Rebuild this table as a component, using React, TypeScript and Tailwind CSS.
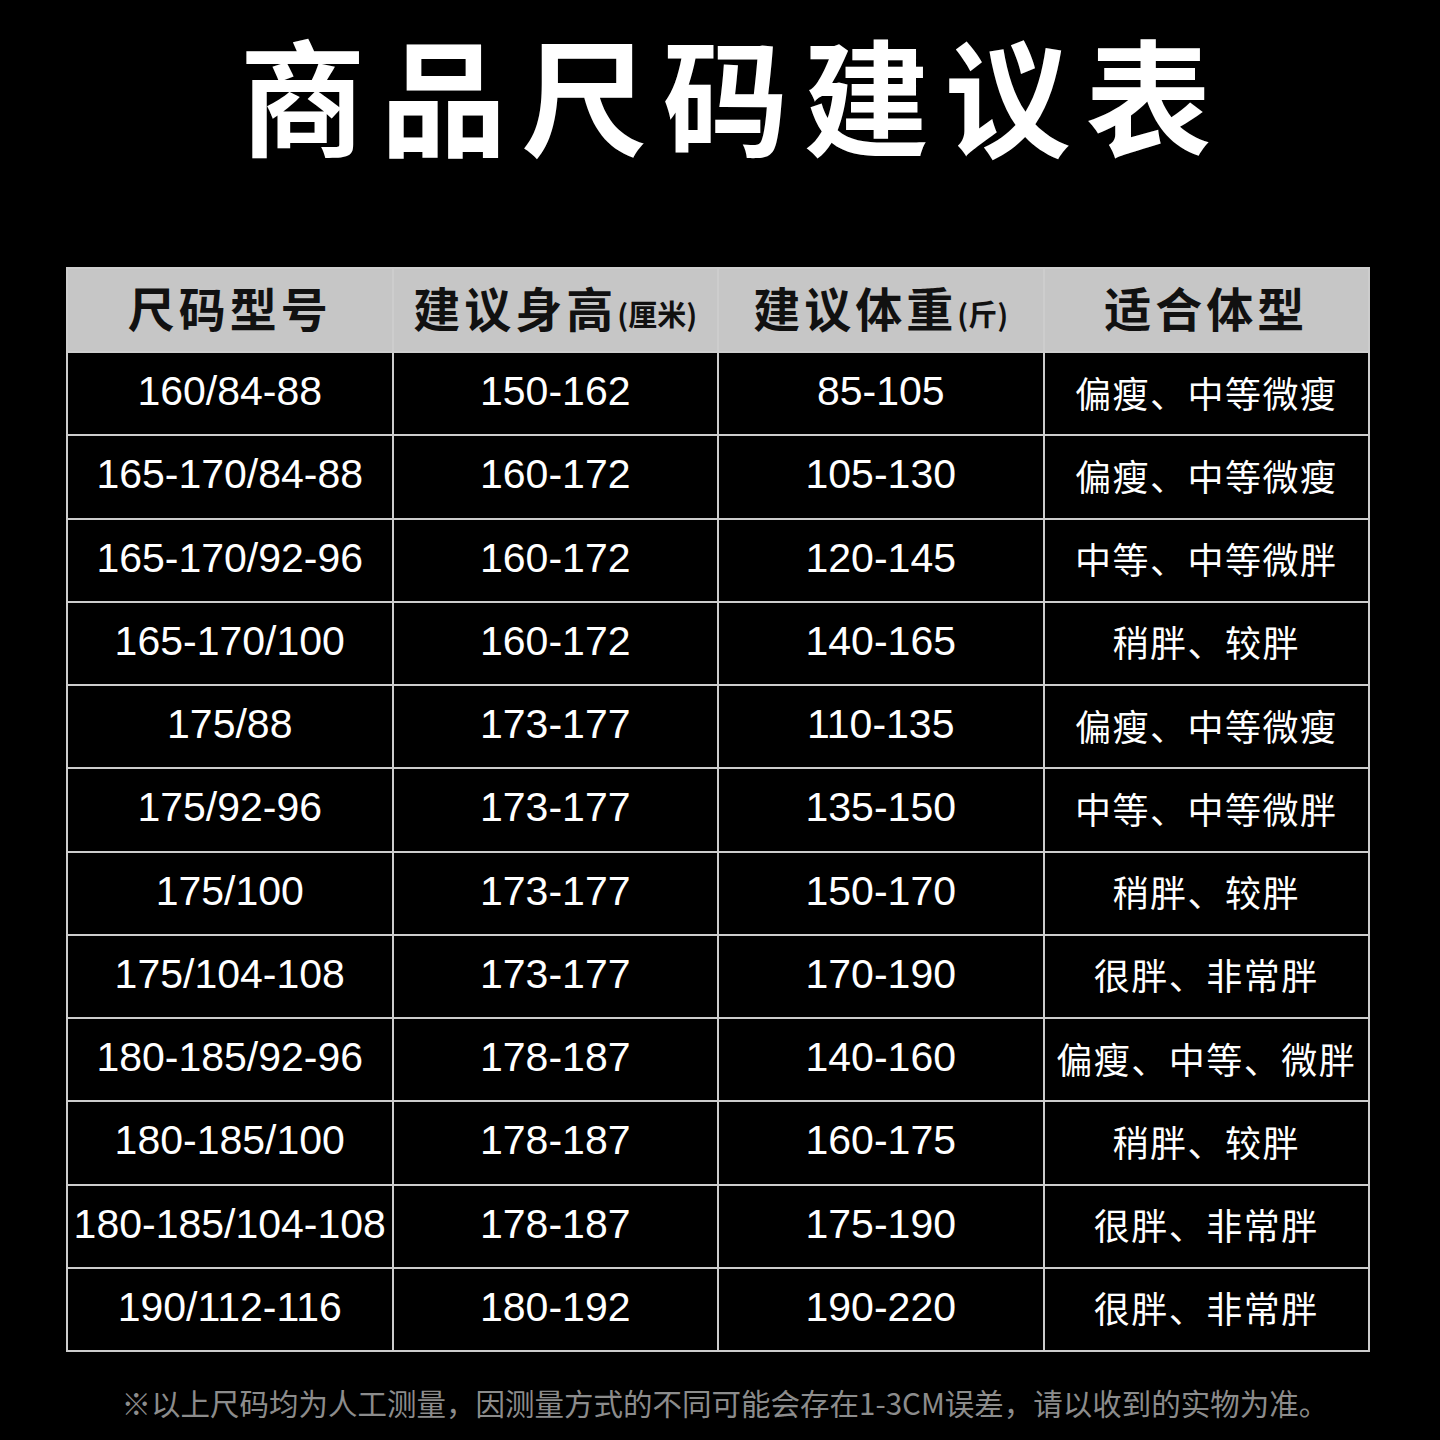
import React from "react";

const rows: [string, string, string, string][] = [
  ["160/84-88", "150-162", "85-105", "偏瘦、中等微瘦"],
  ["165-170/84-88", "160-172", "105-130", "偏瘦、中等微瘦"],
  ["165-170/92-96", "160-172", "120-145", "中等、中等微胖"],
  ["165-170/100", "160-172", "140-165", "稍胖、较胖"],
  ["175/88", "173-177", "110-135", "偏瘦、中等微瘦"],
  ["175/92-96", "173-177", "135-150", "中等、中等微胖"],
  ["175/100", "173-177", "150-170", "稍胖、较胖"],
  ["175/104-108", "173-177", "170-190", "很胖、非常胖"],
  ["180-185/92-96", "178-187", "140-160", "偏瘦、中等、微胖"],
  ["180-185/100", "178-187", "160-175", "稍胖、较胖"],
  ["180-185/104-108", "178-187", "175-190", "很胖、非常胖"],
  ["190/112-116", "180-192", "190-220", "很胖、非常胖"],
];

const cjk = { fontFamily: '"Noto Sans CJK SC", "Noto Sans", sans-serif' };
const num = { fontFamily: '"Liberation Sans", Arial, "Noto Sans CJK SC", sans-serif' };

export default function App() {
  return (
    <div className="w-[1440px] h-[1440px] bg-black overflow-hidden flex flex-col">
      <div
        className="h-[267px] flex justify-center text-white font-bold text-[126px] leading-[184px] tracking-[15px] pl-[26px]"
        style={cjk}
      >
        商品尺码建议表
      </div>
      <div className="ml-[66px] w-[1304px] bg-[#cdcdcd] p-[2px] grid grid-cols-4 gap-[2px]">
        {[
          { main: "尺码型号", sub: "" },
          { main: "建议身高", sub: "(厘米)" },
          { main: "建议体重", sub: "(斤)" },
          { main: "适合体型", sub: "" },
        ].map((h, i) => (
          <div
            key={i}
            className="h-[82px] bg-[#c6c6c6] flex items-center justify-center text-[#111] font-bold pb-[8px]"
            style={cjk}
          >
            <span className="text-[47px] tracking-[4px] leading-none">{h.main}</span>
            {h.sub && <span className="text-[29px] leading-none mt-[14px]">{h.sub}</span>}
          </div>
        ))}
        {rows.map((r, ri) =>
          r.map((c, ci) => (
            <div
              key={ri + "-" + ci}
              className="h-[81.25px] bg-black flex items-center justify-center text-white pb-[4px]"
            >
              {ci < 3 ? (
                <span className="text-[41px] leading-none" style={num}>
                  {c}
                </span>
              ) : (
                <span className="text-[36px] leading-none tracking-[1.5px]" style={cjk}>
                  {c}
                </span>
              )}
            </div>
          ))
        )}
      </div>
      <div
        className="mt-[36px] text-center text-[#8c8c8c] text-[29.5px] leading-none pl-[10px]"
        style={cjk}
      >
        ※以上尺码均为人工测量，因测量方式的不同可能会存在1-3CM误差，请以收到的实物为准。
      </div>
    </div>
  );
}
